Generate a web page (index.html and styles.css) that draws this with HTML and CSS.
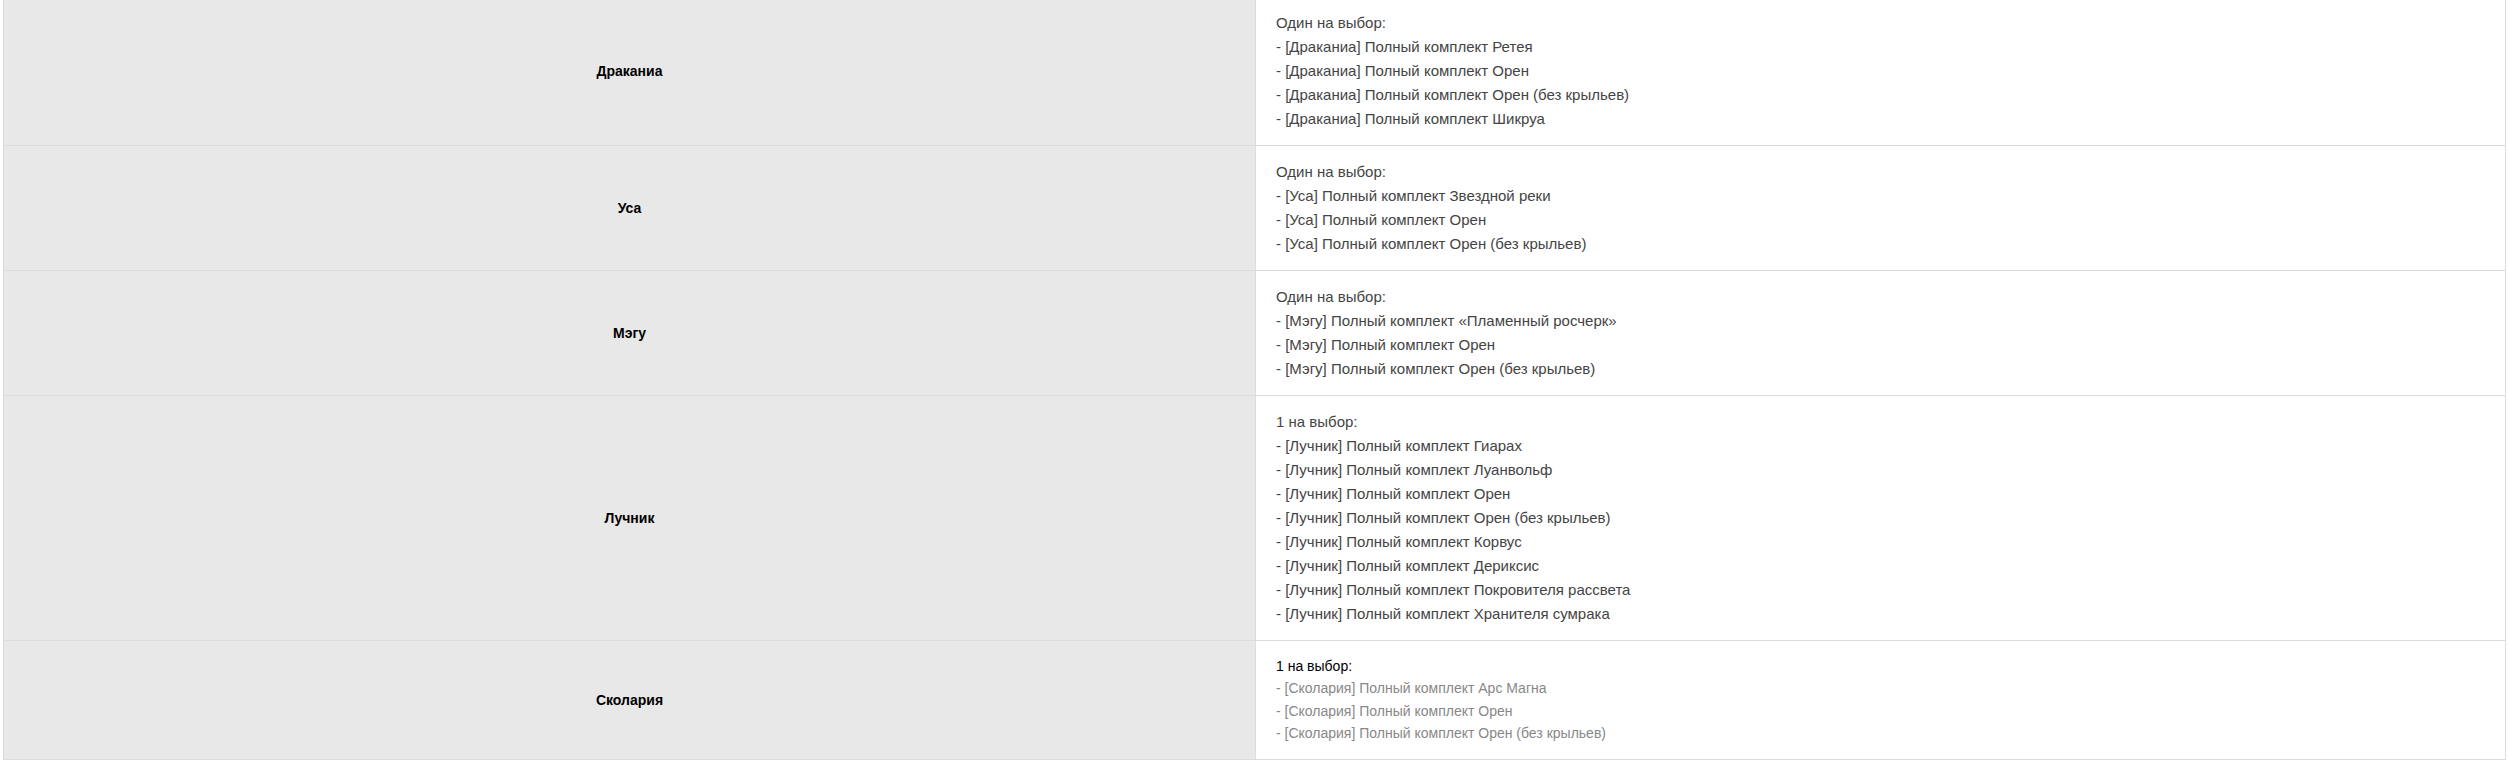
FILE: index.html
```html
<!DOCTYPE html>
<html lang="ru">
<head>
<meta charset="utf-8">
<title>Комплекты</title>
<link rel="stylesheet" href="styles.css">
</head>
<body>
<div class="wrap">
<table class="sets">
  <tbody>
    <tr>
      <th class="cls">Драканиа</th>
      <td class="items">
        Один на выбор:<br>
        - [Драканиа] Полный комплект Ретея<br>
        - [Драканиа] Полный комплект Орен<br>
        - [Драканиа] Полный комплект Орен (без крыльев)<br>
        - [Драканиа] Полный комплект Шикруа
      </td>
    </tr>
    <tr>
      <th class="cls">Уса</th>
      <td class="items">
        Один на выбор:<br>
        - [Уса] Полный комплект Звездной реки<br>
        - [Уса] Полный комплект Орен<br>
        - [Уса] Полный комплект Орен (без крыльев)
      </td>
    </tr>
    <tr>
      <th class="cls">Мэгу</th>
      <td class="items">
        Один на выбор:<br>
        - [Мэгу] Полный комплект «Пламенный росчерк»<br>
        - [Мэгу] Полный комплект Орен<br>
        - [Мэгу] Полный комплект Орен (без крыльев)
      </td>
    </tr>
    <tr>
      <th class="cls">Лучник</th>
      <td class="items">
        1 на выбор:<br>
        - [Лучник] Полный комплект Гиарах<br>
        - [Лучник] Полный комплект Луанвольф<br>
        - [Лучник] Полный комплект Орен<br>
        - [Лучник] Полный комплект Орен (без крыльев)<br>
        - [Лучник] Полный комплект Корвус<br>
        - [Лучник] Полный комплект Дериксис<br>
        - [Лучник] Полный комплект Покровителя рассвета<br>
        - [Лучник] Полный комплект Хранителя сумрака
      </td>
    </tr>
    <tr>
      <th class="cls">Сколария</th>
      <td class="items items-small">
        <span class="lead">1 на выбор:</span><br>
        <span class="muted">- [Сколария] Полный комплект Арс Магна</span><br>
        <span class="muted">- [Сколария] Полный комплект Орен</span><br>
        <span class="muted">- [Сколария] Полный комплект Орен (без крыльев)</span>
      </td>
    </tr>
  </tbody>
</table>
</div>
</body>
</html>
```
FILE: styles.css
```css
html, body {
  margin: 0;
  padding: 0;
  background: #fff;
}
body {
  font-family: "Liberation Sans", Arial, sans-serif;
  color: #444;
}
.wrap {
  padding: 0 3px;
  margin-top: -4px;
}
.sets {
  width: 100%;
  border-collapse: collapse;
  table-layout: fixed;
  border: 1px solid #dcdcdc;
}
.sets th,
.sets td {
  border: 1px solid #dcdcdc;
}
.cls {
  width: 50%;
  background: #e8e8e8;
  color: #000;
  font-size: 14px;
  font-weight: bold;
  text-align: center;
  vertical-align: middle;
  padding: 0;
}
.items {
  background: #fff;
  font-size: 15px;
  line-height: 24px;
  text-align: left;
  vertical-align: top;
  padding: 14px 20px 14px 20px;
}
.items-small {
  font-size: 14px;
  line-height: 22.4px;
}
.lead {
  color: #000;
}
.muted {
  color: #888;
}
```
